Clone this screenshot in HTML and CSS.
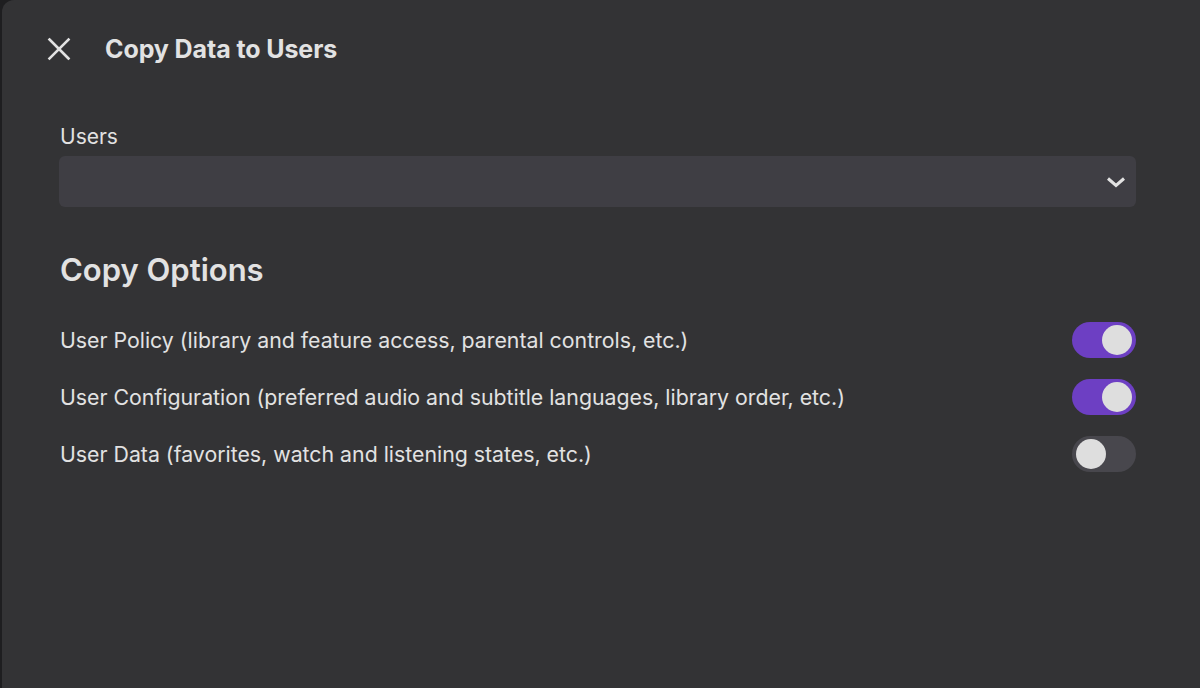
FILE: index.html
```html
<!DOCTYPE html>
<html lang="en">
<head>
    <meta charset="UTF-8">
    <title>Copy Data to Users</title>
    <link rel="stylesheet" href="styles.css">
</head>
<body>
    <div class="dialog">
        <div class="dialog-header">
            <button class="close-btn" aria-label="Close">
                <svg width="24" height="24" viewBox="0 0 24 24"><path d="M2.5 2.5L21.5 21.5M21.5 2.5L2.5 21.5" stroke="currentColor" stroke-width="2.6" stroke-linecap="square" fill="none"/></svg>
            </button>
            <h1 class="dialog-title">Copy Data to Users</h1>
        </div>

        <div class="dialog-content">
            <label class="field-label">Users</label>
            <div class="select">
                <svg class="chevron" width="20" height="20" viewBox="0 0 20 20"><path d="M2 6.5L10 13.5L18 6.5" stroke="currentColor" stroke-width="3" fill="none"/></svg>
            </div>

            <h2 class="section-title">Copy Options</h2>

            <div class="option">
                <span>User Policy (library and feature access, parental controls, etc.)</span>
                <span class="toggle on"><span class="knob"></span></span>
            </div>
            <div class="option">
                <span>User Configuration (preferred audio and subtitle languages, library order, etc.)</span>
                <span class="toggle on"><span class="knob"></span></span>
            </div>
            <div class="option">
                <span>User Data (favorites, watch and listening states, etc.)</span>
                <span class="toggle"><span class="knob"></span></span>
            </div>
        </div>
    </div>
</body>
</html>
```

FILE: styles.css
```css
* {
    margin: 0;
    padding: 0;
    box-sizing: border-box;
}

body {
    height: 100vh;
    background: #1e1e20;
    font-family: Inter, 'Noto Sans', sans-serif;
    color: #e2e2e2;
    overflow: hidden;
    display: flex;
}

.dialog {
    flex: 1;
    margin-left: 2px;
    background: #333335;
    border-top-left-radius: 12px;
}

.dialog-header {
    display: flex;
    align-items: center;
    height: 98px;
    padding-left: 45px;
}

.close-btn {
    width: 24px;
    height: 24px;
    background: none;
    border: none;
    color: #e2e2e2;
    display: flex;
    align-items: center;
    justify-content: center;
    margin-right: 34px;
}

.dialog-title {
    font-size: 25px;
    font-weight: 700;
    letter-spacing: -0.1px;
}

.dialog-content {
    padding: 26px 64px 0 57px;
}

.field-label {
    display: block;
    font-size: 21px;
    margin-left: 1px;
    margin-bottom: 7px;
}

.select {
    height: 51px;
    background: #3f3e44;
    border-radius: 6px;
    display: flex;
    align-items: center;
    justify-content: flex-end;
    padding-right: 10px;
}

.chevron {
    color: #e2e2e2;
}

.section-title {
    font-size: 31px;
    font-weight: 600;
    margin: 44px 0 34px 1px;
}

.option {
    display: flex;
    align-items: center;
    justify-content: space-between;
    height: 36px;
    margin-bottom: 21px;
    padding-left: 1px;
    font-size: 21.3px;
}

.toggle {
    width: 64px;
    height: 36px;
    border-radius: 18px;
    background: #48474d;
    display: flex;
    align-items: center;
    padding: 0 4px;
}

.toggle.on {
    background: #6d3fc3;
    justify-content: flex-end;
}

.knob {
    width: 30px;
    height: 30px;
    border-radius: 50%;
    background: #dedede;
}
```
